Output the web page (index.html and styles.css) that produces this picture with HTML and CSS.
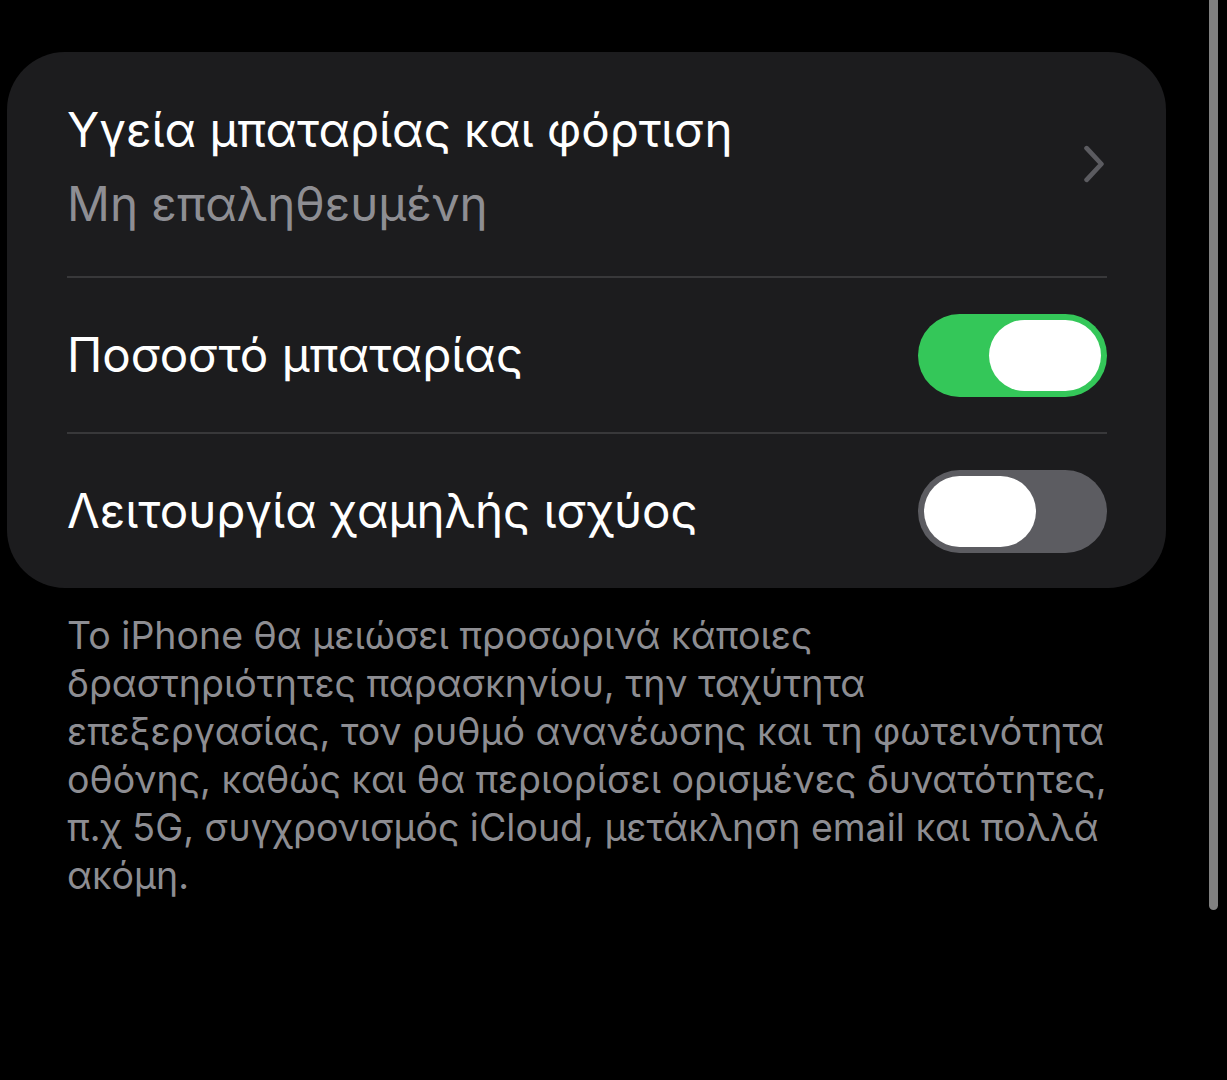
FILE: index.html
```html
<!DOCTYPE html>
<html lang="el">
<head>
<meta charset="utf-8">
<link rel="stylesheet" href="styles.css">
</head>
<body>
<div class="page">
  <section class="card">
    <div class="row row-tall">
      <div class="labels">
        <div class="title">Υγεία μπαταρίας και φόρτιση</div>
        <div class="subtitle">Μη επαληθευμένη</div>
      </div>
      <svg class="chevron" width="22" height="36" viewBox="0 0 22 36"><path d="M4 3 L18 18 L4 33" fill="none" stroke="#5b5b60" stroke-width="4.5" stroke-linecap="round" stroke-linejoin="round"/></svg>
    </div>
    <div class="sep"></div>
    <div class="row">
      <div class="title">Ποσοστό μπαταρίας</div>
      <div class="toggle on"><div class="knob"></div></div>
    </div>
    <div class="sep"></div>
    <div class="row">
      <div class="title">Λειτουργία χαμηλής ισχύος</div>
      <div class="toggle off"><div class="knob"></div></div>
    </div>
  </section>
  <p class="footer">Το iPhone θα μειώσει προσωρινά κάποιες<br>δραστηριότητες παρασκηνίου, την ταχύτητα<br>επεξεργασίας, τον ρυθμό ανανέωσης και τη φωτεινότητα<br>οθόνης, καθώς και θα περιορίσει ορισμένες δυνατότητες,<br>π.χ 5G, συγχρονισμός iCloud, μετάκληση email και πολλά<br>ακόμη.</p>
</div>
<div class="scrollbar"></div>
</body>
</html>
```
FILE: styles.css
```css
html, body {
  margin: 0;
  padding: 0;
  background: #000;
  height: 100%;
}
body {
  font-family: Inter, "Noto Sans", "DejaVu Sans", sans-serif;
  color: #fff;
}
.page {
  padding-top: 52px;
  padding-left: 7px;
  width: 1159px;
}
.card {
  background: #1c1c1e;
  border-radius: 58px;
  padding: 0 59px 0 60px;
}
.row {
  height: 154px;
  display: flex;
  align-items: center;
  justify-content: space-between;
}
.row-tall {
  height: 224px;
}
.title {
  font-size: 47.5px;
  line-height: 60px;
}
.row-tall .title {
  line-height: 74px;
}
.subtitle {
  font-size: 47.5px;
  line-height: 74px;
  color: #8e8e93;
}
.labels {
  display: flex;
  flex-direction: column;
  padding-top: 6px;
}
.chevron {
  margin-right: 1px;
  width: 24px;
  height: 38px;
}
.sep {
  height: 2px;
  background: #38383a;
}
.toggle {
  width: 189px;
  height: 83px;
  border-radius: 42px;
  box-sizing: border-box;
  padding: 6px;
  display: flex;
}
.toggle.on {
  background: #34c759;
  justify-content: flex-end;
}
.toggle.off {
  background: #5c5c61;
  justify-content: flex-start;
}
.knob {
  width: 112px;
  height: 71px;
  border-radius: 36px;
  background: #fff;
}
.footer {
  margin: 24px 0 0 60px;
  font-size: 37.5px;
  line-height: 48px;
  color: #8d8d92;
  white-space: nowrap;
  letter-spacing: 0;
}
.scrollbar {
  position: fixed;
  top: 0;
  left: 1209px;
  width: 9px;
  height: 910px;
  background: #808080;
  border-radius: 0 0 5px 5px;
}
```
